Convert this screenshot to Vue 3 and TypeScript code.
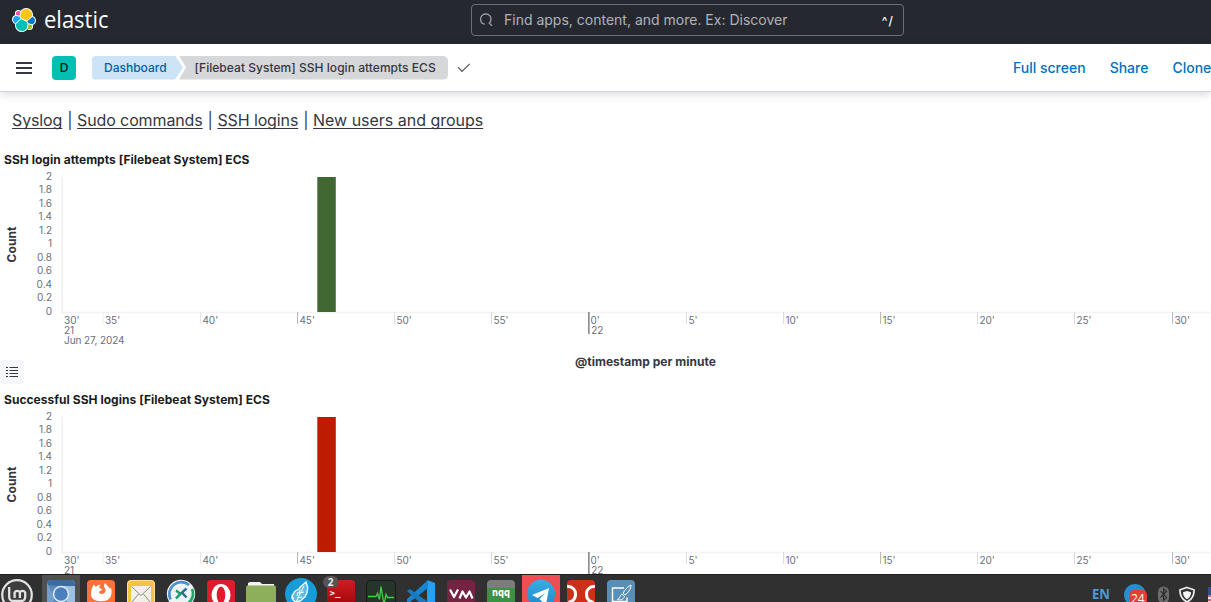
<script setup lang="ts">
interface Panel {
  title: string
  color: string
  legend: boolean
}

interface Tick {
  x: number
  label: string
  color: string
}

const panels: Panel[] = [
  { title: 'SSH login attempts [Filebeat System] ECS', color: '#416833', legend: true },
  { title: 'Successful SSH logins [Filebeat System] ECS', color: '#bd1c00', legend: false },
]

const links: string[] = ['Syslog', 'Sudo commands', 'SSH logins', 'New users and groups']
const actions: string[] = ['Full screen', 'Share', 'Clone']

const yTicks = ['0', '0.2', '0.4', '0.6', '0.8', '1', '1.2', '1.4', '1.6', '1.8', '2'].map(
  (label, i) => ({ label, y: 146.5 - i * 13.5 }),
)

const minutes = ['35', '40', '45', '50', '55', '0', '5', '10', '15', '20', '25', '30']
const tickColors = ['#eceef1', '#e4e6ea', '#b4b7bd', '#e0e2e6', '#d5d7dc', '#8d9096', '#dcdee2', '#dcdee2', '#b9bbc0', '#dcdee2', '#d9dbdf', '#b9bbc0']
const xTicks: Tick[] = minutes.map((m, i) => ({
  x: Math.floor(102.9 + i * 97.2),
  label: `${m}'`,
  color: tickColors[i],
})).map((t) => (t.x === 102 ? { ...t, x: 102.5 } : t))
</script>

<template>
  <div class="screen">
    <header class="topbar">
      <div class="brand">
        <svg class="brand-mark" viewBox="0 0 32 32">
          <path fill="#fff" d="M32 16.77c0-2.68-1.66-5.02-4.16-5.94.11-.57.17-1.15.17-1.75 0-5.01-4.07-9.08-9.07-9.08-2.93 0-5.65 1.4-7.36 3.77a4.8 4.8 0 0 0-2.94-1 4.82 4.82 0 0 0-4.82 4.81c0 .58.1 1.14.3 1.67A6.38 6.38 0 0 0 0 15.23c0 2.69 1.67 5.04 4.18 5.95-.11.56-.17 1.15-.17 1.75 0 4.99 4.06 9.05 9.05 9.05 2.93 0 5.65-1.41 7.35-3.77a4.79 4.79 0 0 0 2.95 1.03 4.82 4.82 0 0 0 4.81-4.82c0-.58-.1-1.14-.3-1.67A6.37 6.37 0 0 0 32 16.77" />
          <path fill="#fec514" d="M12.58 13.79l7 3.19 7.06-6.19a7.8 7.8 0 0 0 .15-1.56c0-4.34-3.53-7.87-7.87-7.87-2.6 0-5.03 1.28-6.49 3.42l-1.18 6.09z" />
          <path fill="#00bfb3" d="M5.33 21.22a7.97 7.97 0 0 0-.16 1.59c0 4.36 3.55 7.9 7.9 7.9 2.62 0 5.07-1.29 6.54-3.45l1.17-6.07-1.56-2.98-7.02-3.2z" />
          <path fill="#f04e98" d="M5.29 9.09l4.8 1.13 1.05-5.46a3.79 3.79 0 0 0-5.85 4.33" />
          <path fill="#1ba9f5" d="M4.87 10.23a5.33 5.33 0 0 0-3.59 5.01c0 2.23 1.38 4.22 3.45 5.01l6.73-6.08-1.24-2.64z" />
          <path fill="#93c90e" d="M20.87 27.25a3.78 3.78 0 0 0 5.85-4.32l-4.79-1.12z" />
          <path fill="#0077cc" d="M21.85 20.48l5.28 1.23a5.35 5.35 0 0 0 3.59-5.01 5.36 5.36 0 0 0-3.44-5l-6.9 6.05z" />
        </svg>
        <svg class="brand-name" width="70" height="36" viewBox="0 0 70 36">
          <text x="0" y="25" textLength="64.5" lengthAdjust="spacingAndGlyphs">elastic</text>
        </svg>
      </div>
      <div class="search">
        <svg width="16" height="16" viewBox="0 0 16 16" fill="none" stroke="#a0a3aa" stroke-width="1.300">
          <path d="M5.800 12.200C3 11.800 1.600 9.700 1.600 7.200 1.600 4.200 3.800 2 6.800 2s5.200 2.200 5.200 5.200c0 1.500-.6 2.900-1.700 3.900M9.800 10.600l3.200 3.200" />
        </svg>
        <span class="placeholder">Find apps, content, and more. Ex: Discover</span>
        <span class="shortcut">^/</span>
      </div>
    </header>

    <nav class="subbar">
      <svg class="menu" width="16" height="12" viewBox="0 0 16 12" fill="#343741">
        <path d="M0 0h16v2H0zM0 5h16v2H0zM0 10h16v2H0z" />
      </svg>
      <span class="space">D</span>
      <div class="crumbs">
        <span class="crumb first"><span class="crumb-text">Dashboard</span></span>
        <span class="crumb last"><span class="crumb-text">[Filebeat System] SSH login attempts ECS</span></span>
      </div>
      <svg class="check" width="14" height="10" viewBox="0 0 14 10" fill="none" stroke="#4b4e57" stroke-width="1.100">
        <path d="M1 4.200 5 8.400 12.700.9" />
      </svg>
      <div class="actions">
        <a v-for="a in actions" :key="a">{{ a }}</a>
      </div>
    </nav>

    <main class="content">
      <div class="markdown">
        <template v-for="(l, i) in links" :key="l">
          <span v-if="i" class="bar">|</span><a>{{ l }}</a>
        </template>
      </div>

      <section v-for="p in panels" :key="p.title" class="panel">
        <h2>{{ p.title }}</h2>
        <svg class="chart" width="1211" height="220" viewBox="0 0 1211 220">
          <path d="M62 9v135.500h1149" fill="none" stroke="#f2f3f5" stroke-width="1.700" />
          <text class="axis-title" transform="translate(16 76.500) rotate(-90)" text-anchor="middle" textLength="36">Count</text>
          <g class="labels">
            <text v-for="t in yTicks" :key="t.label" x="52" :y="t.y" text-anchor="end">{{ t.label }}</text>
            <text x="64" y="156">30'</text>
            <text x="64" y="166">21</text>
            <text x="64" y="176" textLength="60.500">Jun 27, 2024</text>
            <text v-for="t in xTicks" :key="t.x" :x="t.x + 2.400" y="156">{{ t.label }}</text>
            <text x="591.200" y="166">22</text>
          </g>
          <rect v-for="t in xTicks" :key="t.x" :x="t.x" y="144" :width="t.label === `0'` ? 1.700 : 1" :height="t.label === `0'` ? 22 : 12" :fill="t.color" />
          <rect x="317.300" y="9" width="18.500" height="135" :fill="p.color" />
          <text class="axis-title" x="575" y="198" textLength="141">@timestamp per minute</text>
        </svg>
        <span v-if="p.legend" class="legend">
          <svg width="12" height="11" viewBox="0 0 12 11" fill="#343741">
            <path d="M0 0h2v1H0zM3.500 0H12v1H3.500zM0 3h2v1H0zM3.500 3H12v1H3.500zM0 6h2v1H0zM3.500 6H12v1H3.500zM0 9h2v1H0zM3.500 9H12v1H3.500z" />
          </svg>
        </span>
      </section>
    </main>

    <footer class="taskbar">
      <svg width="1211" height="28" viewBox="0 574 1211 28">
        <defs>
          <linearGradient id="tg" x1="0" y1="0" x2="0" y2="1"><stop offset="0" stop-color="#38aee4" /><stop offset="1" stop-color="#1e88c8" /></linearGradient>
          <linearGradient id="rd" x1="0" y1="0" x2="0" y2="1"><stop offset="0" stop-color="#d01c20" /><stop offset="1" stop-color="#9c0508" /></linearGradient>
        </defs>
        <rect y="574" width="1211" height="28" fill="#303030" />
        <rect y="574" width="1211" height="1" fill="#1d1d1d" />
        <rect x="42" y="575" width="38" height="27" fill="#505050" />
        <rect x="522" y="575" width="38" height="27" fill="#f04e53" />

        <!-- Mint menu -->
        <g fill="none" stroke="#e2e2e2">
          <circle cx="17" cy="595" r="14.800" stroke-width="2.200" fill="#3d3d3d" />
          <path d="M9.200 587v10a4 4 0 0 0 4 4h8a4 4 0 0 0 4-4v-4.500a3 3 0 0 0-5.300 0v5.500m0-5.500a3 3 0 0 0-5.300 0v5.500" stroke-width="2.300" />
        </g>

        <!-- Chromium -->
        <rect x="47" y="580" width="28" height="28" rx="4" fill="#5a87b8" />
        <path d="M47 585a5 5 0 0 1 5-5h18a5 5 0 0 1 5 5v1H61z" fill="#3d6ba0" />
        <path d="M61 586h14v16h-8z" fill="#9dc0e2" />
        <path d="M47 583l8 15-2 4h-6z" fill="#72a0cc" />
        <circle cx="61" cy="594" r="8.200" fill="#dfebf7" /><circle cx="61" cy="594" r="6.700" fill="#4b80bd" />

        <!-- Firefox -->
        <rect x="87" y="580" width="28" height="28" rx="4" fill="#fb7139" />
        <path d="M91 593.500c0-2.500.5-4.500 1.500-6.500l1.200-2.500 2.300 2.500c1.200-1.800 3-2.500 4.800-2.300-1.200 1-1.800 2-1.500 3l2.700 1.500c0 1.500-2.500 1.500-3 3 .5 1.800 3 2.300 5 1s2-4 .5-5.700c-1-1.500-.5-3.500.8-4.500.5 2 3.500 3 4.700 6l.8-1.500c1.500 3.500 1 8.500-2 11.500s-14 3.500-17-1.500c-.6-1.500-.8-2.500-.8-4z" fill="#fff" />

        <!-- Mail -->
        <rect x="127" y="580" width="28" height="28" rx="4" fill="#f4c247" />
        <rect x="127.500" y="580.500" width="27" height="27" rx="4" fill="none" stroke="#ffe08b" />
        <rect x="131" y="586" width="20" height="16" fill="#f2f0e9" />
        <path d="M131.500 586.500l9.500 9 9.500-9M132 602l6.500-8M150 602l-6.500-8" fill="none" stroke="#77736b" stroke-width=".8" />

        <!-- Remote desktop client -->
        <circle cx="181" cy="594" r="14.200" fill="#eef2f3" />
        <path d="M170.500 599.500a12 12 0 0 1 18.500-14.500" fill="none" stroke="#4a8fd0" stroke-width="2.700" />
        <path d="M192 589a12 12 0 0 1-3.500 14" fill="none" stroke="#20a56a" stroke-width="2.700" />
        <path d="M176 590.500l4.500 3.300-4.500 4.500" fill="none" stroke="#159b65" stroke-width="2.400" /><path d="M186.500 588.500l-4.500 4 4.500 5" fill="none" stroke="#28718c" stroke-width="2.400" />

        <!-- Opera -->
        <rect x="207" y="580" width="28" height="28" rx="4" fill="#df1c2c" />
        <ellipse cx="221" cy="595" rx="9.500" ry="11" fill="#fff" /><ellipse cx="221" cy="595" rx="4.300" ry="8.600" fill="#df1c2c" />

        <!-- Files -->
        <path d="M248 585v-2l2-1h10l2 2h12v4h-26z" fill="#f4f4f0" />
        <path d="M246 587q0-1.500 1.500-1.500h27q1.500 0 1.500 1.500v15h-30z" fill="#8daf5c" />

        <!-- Feather -->
        <circle cx="301" cy="594" r="16" fill="#189bd7" />
        <path d="M296 602c-5-2-5-6-2-9 0-2 3-3 5-4 1-3 4-4 7-7 1 4 3 6 1 9 1 3-2 4-2 6-2 1-3 3-5 4z" fill="#5fbbe5" stroke="#fff" stroke-width="1.300" />
        <path d="M296 602l8-16m-7 10 1-4m-1 6 5-1m-3-3 1-4m-1 3 5-1m-10 7-2-3" stroke="#fff" fill="none" />

        <!-- Terminal -->
        <rect x="327" y="580" width="28" height="28" rx="4" fill="url(#rd)" />
        <text x="329.500" y="596" class="mono">&gt;_</text>
        <rect x="323" y="576" width="15.500" height="12" rx="6" fill="#555" />
        <text x="327.800" y="586" class="badge">2</text>

        <!-- System monitor -->
        <rect x="366.500" y="580.500" width="29" height="28" rx="4" fill="#26352a" stroke="#151b17" />
        <path d="M368 596.500h8l1.500-3 2 6 1.500-13 3 18 2-10 1.500 3h6.500" fill="none" stroke="#45cf48" stroke-width="1.300" />

        <!-- Code editor -->
        <path d="M427 580l8 3v19h-8z" fill="#27a0ef" />
        <path d="M428 580v8l-18 14h-3v-3z" fill="#1684cf" /><path d="M407 591l3-2 18 13h-9z" fill="#1a78bd" />

        <!-- VM -->
        <rect x="447" y="580" width="28" height="28" rx="4" fill="#742343" />
        <path d="M450 589.500l4 7.500 4-7.500M459.500 598.500l3-7 3.500 6 3.500-6 3 7" fill="none" stroke="#fff" stroke-width="2.200" stroke-linejoin="round" />

        <!-- nqq -->
        <rect x="487" y="580" width="28" height="28" rx="4" fill="#7b7d7b" /><path d="M487 588h28v14h-28z" fill="#3d9142" />
        <text x="501" y="595.500" text-anchor="middle" class="nqq" textLength="18" lengthAdjust="spacingAndGlyphs">nqq</text>

        <!-- Telegram -->
        <circle cx="541" cy="594" r="14.200" fill="url(#tg)" />
        <path d="M532 595l17-7-2.500 14h-4l-3-3 6-6-8 5z" fill="#fff" />

        <!-- Red arcs -->
        <rect x="567" y="580" width="28" height="28" rx="4" fill="#cb3019" />
        <path d="M567 586.300c6 .2 8.500 3.700 8.500 7.700s-2.500 7.500-7 8.500M595 586.300c-6 .2-8.500 3.700-8.500 7.700s2.500 7.500 7 8.500" fill="none" stroke="#fff" stroke-width="3" />

        <!-- Drawing tool -->
        <rect x="607" y="580" width="28" height="28" rx="4" fill="#578fb9" />
        <path d="M624 588h-11.500v13.500H627v-4" fill="none" stroke="#fff" stroke-width="1.400" />
        <path d="M631 585c-3 1-6 5-8 8l2 2c3-2 6-6 6-10zM622 594l2.500 2.500c-1 3-4 4-7 3 3-1 2-4 4.500-5.500z" fill="#578fb9" stroke="#fff" stroke-width="1" />

        <!-- Tray -->
        <text x="1092" y="599" class="lang" textLength="18" lengthAdjust="spacingAndGlyphs">EN</text>
        <circle cx="1135" cy="595" r="11" fill="#238fd0" /><circle cx="1129.500" cy="596" r=".8" fill="#fff" />
        <rect x="1129" y="590" width="18" height="18" rx="5" fill="#e63d36" />
        <text x="1131" y="602.500" class="unread">24</text>
        <rect x="1158" y="586.500" width="11" height="17" rx="5.500" fill="#6c6c6c" />
        <path d="M1160.500 591l6 6.500-3 3v-12l3 3-6 6" fill="none" stroke="#292929" stroke-width="1.100" />
        <path d="M1187 587.500l7 2.300c.3 5-2 9.700-7 12.200-5-2.500-7.300-7.200-7-12.200z" fill="#343434" stroke="#ededed" stroke-width="1.700" />
        <path d="M1187 591l4 1.200c0 3-1.300 5.500-4 7-2.700-1.500-4-4-4-7z" fill="#f5f5f5" />
        <rect x="1208" y="587" width="3" height="15" fill="#f3e9ea" /><rect x="1208" y="587" width="3" height="8" fill="#344e8b" />
        <path d="M1208 596h3m-3 4h3" stroke="#ce3a47" stroke-width="1.700" />
      </svg>
    </footer>
  </div>
</template>

<style>
body {
  margin: 0;
  overflow: hidden;
}
</style>

<style scoped>
.screen {
  width: 1211px;
  height: 602px;
  display: flex;
  flex-direction: column;
  overflow: hidden;
  background: #fff;
  color: #343741;
  font-family: Inter, 'Liberation Sans', sans-serif;
}
.topbar {
  flex: none;
  height: 44px;
  display: flex;
  align-items: flex-start;
  background: #25282f;
}
.brand {
  width: 459px;
  padding: 8px 0 0 12px;
  display: flex;
}
.brand-mark {
  width: 24px;
  height: 24px;
}
.brand-name {
  margin: -5px 0 0 8px;
  fill: #fff;
  font: 400 23.500px 'Open Sans', 'Noto Sans', sans-serif;
}
.search {
  box-sizing: border-box;
  width: 433px;
  height: 32px;
  margin-top: 4px;
  padding: 0 9px 0 7px;
  display: flex;
  align-items: center;
  border: 1px solid #6b6e75;
  border-radius: 4px;
  color: #b0b3b9;
  font-size: 14px;
}
.placeholder {
  flex: 1;
  margin: -2px 0 0 9px;
}
.shortcut {
  color: #fff;
  font-size: 12px;
  font-weight: 500;
  letter-spacing: 1px;
}
.subbar {
  flex: none;
  box-sizing: border-box;
  height: 48px;
  display: flex;
  align-items: center;
  padding-left: 16px;
  border-bottom: 1px solid #cfd3dc;
  box-shadow: 0 2px 9px rgba(0, 0, 0, 0.16);
}
.subbar > * {
  flex-shrink: 0;
}
.space {
  width: 24px;
  height: 24px;
  margin: 0 16px 0 20px;
  border-radius: 4px;
  background: #00bfb3;
  color: #111;
  font-size: 12px;
  font-weight: 500;
  line-height: 24px;
  text-align: center;
}
.crumbs {
  display: flex;
  font-size: 12px;
  font-weight: 500;
  line-height: 24px;
  white-space: nowrap;
}
.crumb {
  box-sizing: border-box;
  height: 24px;
}
.first {
  width: 91px;
  padding-left: 12px;
  background: #cce4f5;
  color: #0061a6;
  border-radius: 4px 0 0 4px;
  clip-path: polygon(0 0, 83px 0, 100% 50%, 83px 100%, 0 100%);
}
.last {
  width: 269px;
  margin-left: -4px;
  padding-left: 15.500px;
  background: #d6d7d9;
  border-radius: 0 5px 5px 0;
  letter-spacing: 0.04px;
  clip-path: polygon(0 0, 100% 0, 100% 100%, 0 100%, 7px 50%);
}
.check {
  margin-left: 9px;
}
.actions {
  flex: none;
  display: flex;
  gap: 24px;
  margin-left: 542px;
  color: #0071c2;
  font-size: 14px;
  font-weight: 500;
  white-space: nowrap;
}
.content {
  flex: 1;
  min-height: 0;
  overflow: hidden;
}
.markdown {
  height: 58px;
  padding-left: 12px;
  font-size: 16px;
  line-height: 57px;
  white-space: nowrap;
}
.markdown a {
  letter-spacing: -0.12px;
  text-decoration: underline;
  text-decoration-skip-ink: none;
  text-underline-offset: 2px;
}
.markdown a:last-child {
  letter-spacing: -0.02px;
}
.bar {
  margin: 0 4.500px 0 5px;
}
.panel {
  height: 240px;
  position: relative;
}
h2 {
  height: 18px;
  margin: 0;
  padding-left: 4px;
  color: #1a1c21;
  font-size: 12px;
  font-weight: 700;
  line-height: 20px;
  letter-spacing: 0.035px;
}
.chart {
  display: block;
}
.labels {
  fill: #69707d;
  font-size: 10px;
}
.axis-title {
  fill: #343741;
  font-size: 12px;
  font-weight: 700;
}
.legend {
  position: absolute;
  left: 0;
  top: 210px;
  width: 24px;
  height: 24px;
  display: flex;
  align-items: center;
  justify-content: center;
  border-radius: 4px;
  background: #f5f7fb;
}
.taskbar {
  flex: none;
  height: 28px;
  position: relative;
}
.taskbar svg {
  display: block;
}
.mono {
  fill: #fff;
  font: 700 9px 'DejaVu Sans Mono', monospace;
}
.badge {
  fill: #e8e8e8;
  font: 700 10px 'Noto Sans', sans-serif;
}
.nqq {
  fill: #fff;
  font: 700 10px 'DejaVu Sans', sans-serif;
}
.lang {
  fill: #4c9bd3;
  font: 700 13.500px 'Noto Sans', sans-serif;
}
.unread {
  fill: #fff;
  font: 12px 'Open Sans', sans-serif;
}
</style>
